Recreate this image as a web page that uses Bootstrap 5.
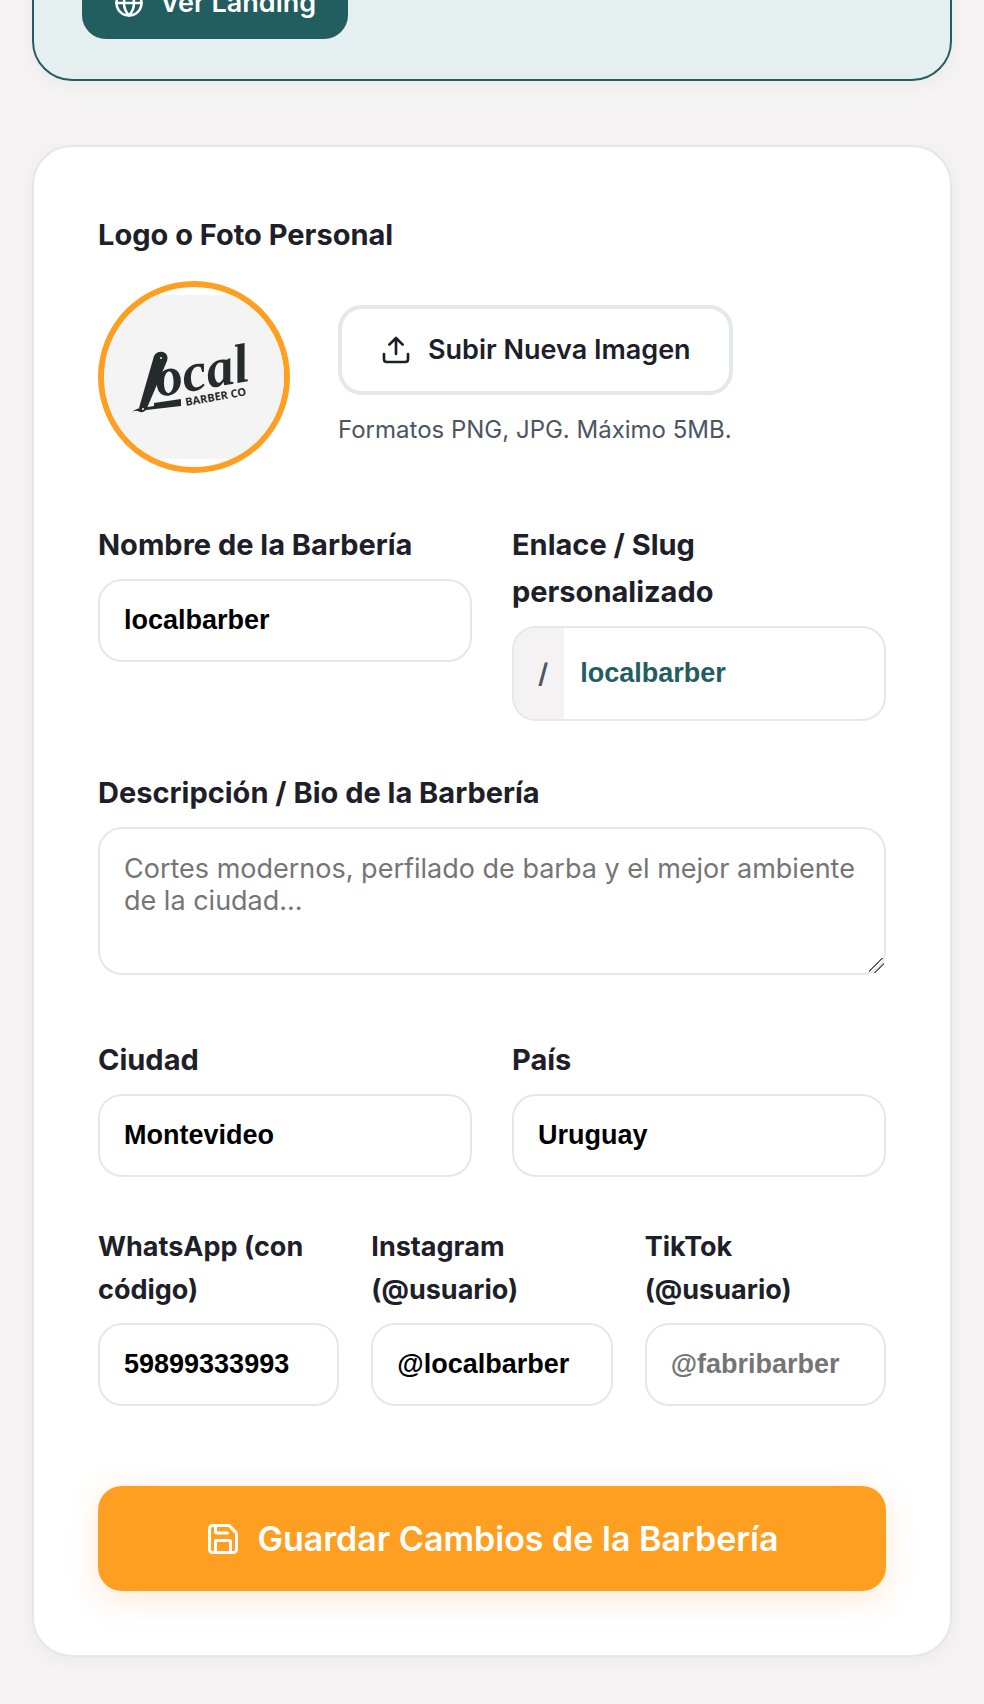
<!DOCTYPE html>
<html lang="es">
<head>
    <meta charset="UTF-8">
    <meta name="viewport" content="width=device-width, initial-scale=1.0">
    <title>Configuración de la Barbería</title>
    <link href="https://cdn.jsdelivr.net/npm/bootstrap@5.3.0/dist/css/bootstrap.min.css" rel="stylesheet">
    <style>
        :root {
            --teal: #225d60;
            --orange: #ff9f22;
            --line: #e5e7eb;
            --ink: #1d2028;
            --muted: #4b5563;
        }
        body {
            background: #f4f2f3;
            color: var(--ink);
            font-family: Inter, "Liberation Sans", sans-serif;
            font-size: 27px;
            line-height: 43px;
        }
        .page-wrap {
            padding: 0 32px 48px;
            overflow: hidden;
        }
        .panel {
            border: 2px solid var(--line);
            border-radius: 40px;
            background: #fff;
            box-shadow: 0 4px 16px rgba(0, 0, 0, 0.04);
        }
        /* the landing panel is scrolled partly out of view */
        .panel-landing {
            margin-top: -76px;
            margin-bottom: 64px;
            padding: 40px 48px;
            border-color: var(--teal);
            background: #e6eff0;
        }
        .panel-form {
            padding: 64px;
        }
        .btn-app {
            display: inline-flex;
            align-items: center;
            justify-content: center;
            gap: 16px;
            border-radius: 24px;
            font-size: 27px;
            font-weight: 600;
            line-height: 43px;
        }
        .btn-landing, .btn-landing:hover {
            padding: 15px 32px;
            border: 0;
            background: var(--teal);
            color: #fff;
        }
        .btn-upload, .btn-upload:hover {
            padding: 19px 38px;
            border: 4px solid var(--line);
            background: #fff;
            color: var(--ink);
            line-height: 44px;
        }
        .btn-save, .btn-save:hover {
            margin-top: 80px;
            padding: 24px;
            border: 0;
            background: var(--orange);
            color: #fff;
            font-size: 34px;
            line-height: 57px;
            box-shadow: 0 8px 32px rgba(255, 140, 40, 0.2);
        }
        .stroke-icon {
            flex: none;
            fill: none;
            stroke: currentColor;
            stroke-width: 2;
            stroke-linecap: round;
            stroke-linejoin: round;
        }
        .field-label {
            display: block;
            margin-bottom: 11px;
            font-size: 29px;
            font-weight: 700;
            line-height: 47px;
        }
        .field-label-sm {
            margin-bottom: 12px;
            font-size: 27px;
            line-height: 43px;
        }
        .logo-title {
            margin-bottom: 23px;
        }
        .logo-ring {
            flex: none;
            width: 192px;
            height: 192px;
            border: 6px solid var(--orange);
            border-radius: 50%;
            overflow: hidden;
        }
        .logo-hint {
            margin-top: 16px;
            color: var(--muted);
            font-size: 24px;
            line-height: 38px;
        }
        .gap-upload {
            gap: 48px;
        }
        .form-stack {
            display: grid;
            gap: 48px;
        }
        .cols-2, .cols-3 {
            display: grid;
            align-items: start;
        }
        .cols-2 {
            grid-template-columns: repeat(2, minmax(0, 1fr));
            gap: 40px;
        }
        .cols-3 {
            grid-template-columns: repeat(3, minmax(0, 1fr));
            gap: 32px;
        }
        .form-control.field {
            padding: 24px;
            border: 2px solid var(--line);
            border-radius: 24px;
            color: #000;
            font-family: "Liberation Sans", Arial, sans-serif;
            font-size: 27px;
            font-weight: 600;
            line-height: 31px;
        }
        .form-control.field::placeholder {
            color: #757575;
        }
        textarea.form-control.field {
            margin-bottom: 13px;
            min-height: 0;
            font-family: Inter, sans-serif;
            font-weight: 400;
            line-height: 32px;
        }
        textarea.field::-webkit-resizer {
            background: linear-gradient(135deg, transparent 42%, #666 42%, #666 48%, transparent 48%, transparent 65%, #666 65%, #666 71%, transparent 71%);
        }
        .slug-box {
            border: 2px solid var(--line);
            border-radius: 24px;
            overflow: hidden;
        }
        .slug-prefix {
            padding: 24px 16px;
            background: #f4f2f3;
            color: var(--muted);
            font-weight: 600;
            padding-left: 24px;
        }
        .slug-box .form-control.field {
            padding: 0 16px;
            border: 0;
            border-radius: 0;
            color: var(--teal);
        }
    </style>
</head>
<body>
    <main class="page-wrap">
        <section class="panel panel-landing">
            <a href="#landing" class="btn btn-app btn-landing">
                <svg class="stroke-icon" width="30" height="30" viewBox="0 0 24 24" aria-hidden="true">
                    <circle cx="12" cy="12" r="10"/>
                    <path d="M12 2a14.5 14.5 0 0 0 0 20 14.5 14.5 0 0 0 0-20M2 12h20"/>
                </svg>
                Ver Landing
            </a>
        </section>

        <form class="panel panel-form" id="barberia">
            <div class="form-stack">
                <div>
                    <div class="field-label logo-title">Logo o Foto Personal</div>
                    <div class="d-flex align-items-center gap-upload">
                        <div class="logo-ring">
                            <svg class="d-block" width="180" height="180" viewBox="0 0 180 180" role="img" aria-label="Local Barber Co">
                                <rect x="1" y="8" width="179" height="164" fill="#f4f4f4"/>
                                <g fill="#252b2c">
                                    <!-- razor standing in for the L -->
                                    <path d="M50 69q3-5 9-4 6 2 4 9L43 121q-4 5-8 0z"/>
                                    <path d="M27 126q5-5 11-5l12-2v-3l27-4v7l-35 4q-4 4-8 1-4-1-7 2z"/>
                                    <circle cx="57" cy="71" r="1" fill="#f4f4f4"/>
                                    <circle cx="39" cy="122" r="1" fill="#f4f4f4"/>
                                    <text transform="translate(54 110) rotate(-10)" font-family="Liberation Serif, serif" font-size="55" font-style="italic" font-weight="700">ocal</text>
                                    <text transform="translate(82 119) rotate(-10)" font-family="Open Sans, sans-serif" font-size="11" font-weight="700">BARBER CO</text>
                                </g>
                            </svg>
                        </div>
                        <div>
                            <button type="button" class="btn btn-app btn-upload">
                                <svg class="stroke-icon" width="32" height="32" viewBox="0 0 24 24" aria-hidden="true">
                                    <path d="M21 15v4a2 2 0 0 1-2 2H5a2 2 0 0 1-2-2v-4M17 8l-5-5-5 5M12 3v12"/>
                                </svg>
                                Subir Nueva Imagen
                            </button>
                            <div class="logo-hint">Formatos PNG, JPG. Máximo 5MB.</div>
                        </div>
                    </div>
                </div>

                <div class="cols-2">
                    <div>
                        <label class="field-label" for="nombre">Nombre de la Barbería</label>
                        <input type="text" class="form-control field" id="nombre" value="localbarber">
                    </div>
                    <div>
                        <label class="field-label" for="slug">Enlace / Slug personalizado</label>
                        <div class="slug-box d-flex align-items-center">
                            <span class="slug-prefix">/</span>
                            <input type="text" class="form-control field" id="slug" value="localbarber">
                        </div>
                    </div>
                </div>

                <div>
                    <label class="field-label" for="bio">Descripción / Bio de la Barbería</label>
                    <textarea class="form-control field" id="bio" rows="3" placeholder="Cortes modernos, perfilado de barba y el mejor ambiente de la ciudad..."></textarea>
                </div>

                <div class="cols-2">
                    <div>
                        <label class="field-label" for="ciudad">Ciudad</label>
                        <input type="text" class="form-control field" id="ciudad" value="Montevideo">
                    </div>
                    <div>
                        <label class="field-label" for="pais">País</label>
                        <input type="text" class="form-control field" id="pais" value="Uruguay">
                    </div>
                </div>

                <div class="cols-3">
                    <div>
                        <label class="field-label field-label-sm" for="whatsapp">WhatsApp (con código)</label>
                        <input type="text" class="form-control field" id="whatsapp" value="59899333993">
                    </div>
                    <div>
                        <label class="field-label field-label-sm" for="instagram">Instagram<br>(@usuario)</label>
                        <input type="text" class="form-control field" id="instagram" value="@localbarber">
                    </div>
                    <div>
                        <label class="field-label field-label-sm" for="tiktok">TikTok<br>(@usuario)</label>
                        <input type="text" class="form-control field" id="tiktok" placeholder="@fabribarber">
                    </div>
                </div>
            </div>

            <button type="submit" class="btn btn-app btn-save w-100">
                <svg class="stroke-icon" width="36" height="36" viewBox="0 0 24 24" aria-hidden="true">
                    <path d="M15.2 3a2 2 0 0 1 1.4.6l3.8 3.8a2 2 0 0 1 .6 1.4V19a2 2 0 0 1-2 2H5a2 2 0 0 1-2-2V5a2 2 0 0 1 2-2z"/>
                    <path d="M17 21v-7a1 1 0 0 0-1-1H8a1 1 0 0 0-1 1v7M7 3v4a1 1 0 0 0 1 1h7"/>
                </svg>
                Guardar Cambios de la Barbería
            </button>
        </form>
    </main>

    <script src="https://cdn.jsdelivr.net/npm/bootstrap@5.3.0/dist/js/bootstrap.bundle.min.js"></script>
</body>
</html>
